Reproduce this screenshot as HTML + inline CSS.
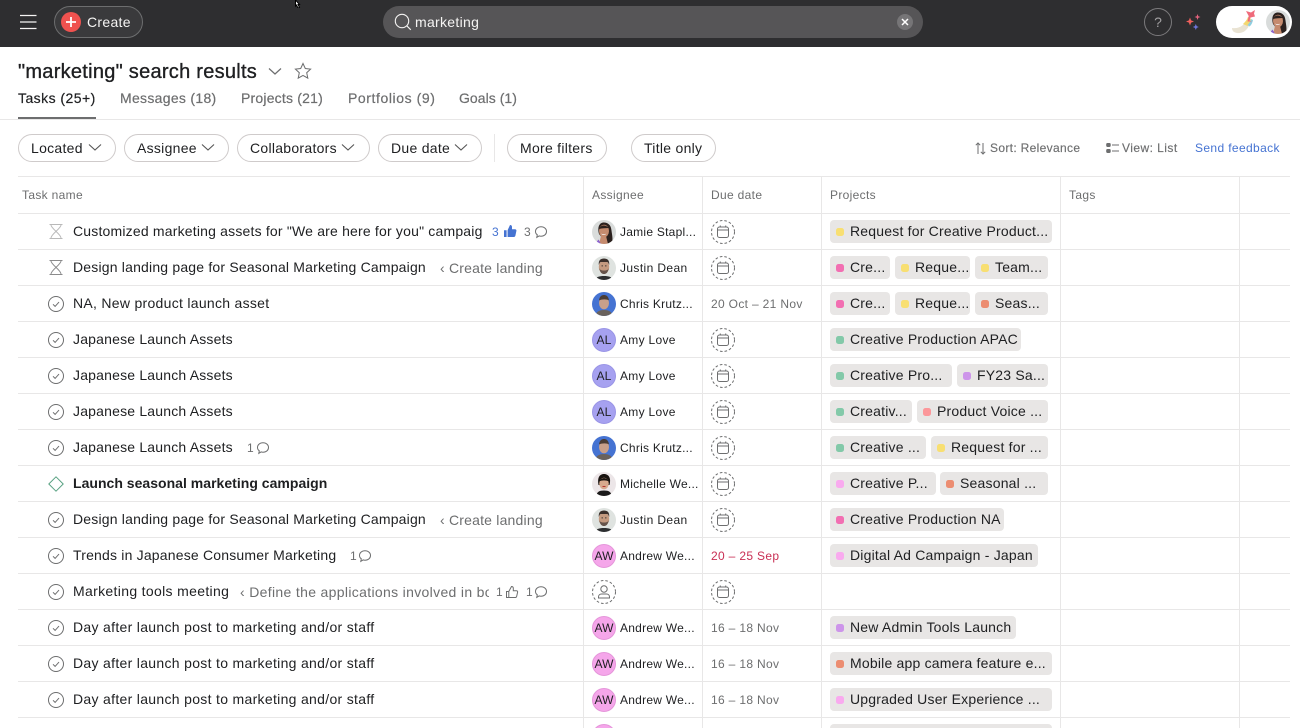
<!DOCTYPE html>
<html lang="en">
<head>
<meta charset="utf-8">
<title>"marketing" search results</title>
<style>
*{box-sizing:border-box}
html,body{margin:0;padding:0;background:#fff}
body{width:1300px;height:728px;position:relative;overflow:hidden;font-family:"Liberation Sans",sans-serif;color:#1e1f21}
.a{position:absolute;white-space:nowrap}
#top{position:absolute;left:0;top:0;width:1300px;height:47px;background:#2e2e30}
.tab{position:absolute;top:90px;font-size:14px;line-height:17px;color:#6d6e6f;-webkit-text-stroke:.2px}
.pill{position:absolute;top:134px;height:28px;border:1px solid #cfcbcb;border-radius:14px;font-size:14px;line-height:26px;letter-spacing:.28px;color:#1e1f21;padding-left:12px}
.pill svg{position:absolute;top:8px}
.hl{position:absolute;left:18px;width:1272px;height:1px;background:#e8e7e7}
.vl{position:absolute;top:177px;height:551px;width:1px;background:#e8e7e7}
.th{position:absolute;top:187px;font-size:12px;line-height:16px;letter-spacing:.33px;color:#6d6e6f}
.r{position:absolute;left:0;width:1300px;height:36px}
.t{position:absolute;left:73px;top:8px;font-size:14px;line-height:18px;letter-spacing:.19px;white-space:nowrap;color:#1e1f21}
.s{position:absolute;top:9px;font-size:14px;line-height:18px;letter-spacing:.2px;white-space:nowrap;color:#6d6e6f}
.n{position:absolute;left:620px;top:10px;font-size:12px;line-height:16px;letter-spacing:.25px;white-space:nowrap;color:#1e1f21}
.d{position:absolute;left:711px;top:10px;font-size:12px;line-height:16px;letter-spacing:.33px;white-space:nowrap;color:#6d6e6f}
.c{position:absolute;top:10px;font-size:12px;line-height:16px;letter-spacing:.3px;white-space:nowrap;color:#6d6e6f}
.g{position:absolute;top:6px;height:23px;background:#e8e6e5;border-radius:4px;font-size:14px;line-height:23px;letter-spacing:.2px;white-space:nowrap;color:#1e1f21;padding-left:20px;overflow:hidden}
.g i{position:absolute;left:6px;top:8px;width:8px;height:8px;border-radius:2.5px}
.i{position:absolute;left:48px;top:10px;width:16px;height:16px}
.av{position:absolute;left:592px;top:6px;width:24px;height:24px}
.ini{position:absolute;left:592px;top:6px;width:24px;height:24px;border-radius:50%;font-size:12px;line-height:22px;text-align:center;letter-spacing:.1px;color:#1e1f21}
.al{background:#a6a1f0;border:1px solid #9a95e6}
.aw{background:#f5a6ea;border:1px solid #e596da}
.cal{position:absolute;left:711px;top:6px;width:24px;height:24px}
.y{background:#f8df72}.p{background:#f26fb2}.o{background:#ec8d71}.gr{background:#83c9a9}.v{background:#cd95ea}.sa{background:#fc979a}.lp{background:#f9aaef}
</style>
</head>
<body>
<svg width="0" height="0" style="position:absolute">
<defs>
<symbol id="chk" viewBox="0 0 16 16"><circle cx="8" cy="8" r="7.500" fill="none" stroke="#6d6e6f" stroke-width="1"/><path d="M5 8.300l2.100 2.100 3.900-4.300" fill="none" stroke="#6d6e6f" stroke-width="1"/></symbol>
<symbol id="hg" viewBox="0 0 16 16"><path d="M1.500 .5h13M1.500 14.500h13M3 1c0 3.500 10 9 10 13M13 1c0 3.500-10 9-10 13" fill="none" stroke="#8b8b8c" stroke-width="1"/></symbol>
<symbol id="cal" viewBox="0 0 24 24"><circle cx="12" cy="12" r="11.500" fill="none" stroke="#6d6e6f" stroke-width="1" stroke-dasharray="2.600 2"/><rect x="6.500" y="7" width="11" height="10.500" rx="2" fill="none" stroke="#6d6e6f" stroke-width="1"/><path d="M6.500 10h11M9.300 5.500V7.500M14.700 5.500V7.500" fill="none" stroke="#6d6e6f" stroke-width="1"/></symbol>
<symbol id="usr" viewBox="0 0 24 24"><circle cx="12" cy="12" r="11.500" fill="none" stroke="#6d6e6f" stroke-width="1" stroke-dasharray="2.600 2"/><circle cx="12" cy="9" r="3.200" fill="none" stroke="#6d6e6f"/><path d="M6.500 18v-1c0-2 1.500-3 3-3h5c1.500 0 3 1 3 3v1z" fill="none" stroke="#6d6e6f"/></symbol>
<symbol id="bub" viewBox="0 0 14 14"><path d="M7 1.800c3.200 0 5.500 2 5.500 4.700S10.200 11.200 7 11.200c-.7 0-1.300-.1-1.900-.3L2.800 12.300l.5-2.500C2.100 9 1.500 7.800 1.500 6.500 1.500 3.800 3.800 1.800 7 1.800z" fill="none" stroke="#6d6e6f"/></symbol>
<symbol id="thumb" viewBox="0 0 14 14"><path d="M1 6.200h2.600V13H1zM4.600 6.200L7 1c1.300 0 2 .8 2 2v2.200h3c1 0 1.600.8 1.400 1.700l-1 4.700c-.2.800-.7 1.400-1.600 1.400H4.600z" fill="#4573d2"/></symbol>
<symbol id="thumbo" viewBox="0 0 14 14"><path d="M1.500 6.500h2.300V12.500H1.500zM3.800 6.500L6.500 1.500c1.100 0 1.800.7 1.800 1.800v2.400h3.100c.9 0 1.400.7 1.200 1.500l-.9 4c-.2.800-.7 1.300-1.500 1.300H3.800" fill="none" stroke="#6d6e6f"/></symbol>
<symbol id="jam" viewBox="0 0 24 24"><clipPath id="cj"><circle cx="12" cy="12" r="12"/></clipPath><g clip-path="url(#cj)"><rect width="24" height="24" fill="#d9dcdb"/><path d="M7 14C5 6 8 2.500 12 2.500s7 2.500 7.500 8c.4 4 2 9 0 13.500H15z" fill="#2b211e"/><ellipse cx="12" cy="11" rx="5" ry="6.300" fill="#c58b6e"/><path d="M7 9c1.500-4 6-5 10-1-3 .2-7 .2-10 1z" fill="#2b211e"/><path d="M9.200 13.500c1.700 1 3.700 1 5 0-.5 2-4.500 2-5 0z" fill="#fff"/><path d="M9 16h5l2 8H7z" fill="#c58b6e"/><path d="M3 24l3.500-4.500L9 24z" fill="#8a5fd0"/></g></symbol>
<symbol id="jus" viewBox="0 0 24 24"><clipPath id="cd"><circle cx="12" cy="12" r="12"/></clipPath><g clip-path="url(#cd)"><rect width="24" height="24" fill="#dfe3e0"/><ellipse cx="12" cy="11" rx="5.200" ry="6.500" fill="#c49a80"/><path d="M6.800 9c-.5-5 2-6.500 5.200-6.500s5.700 1.500 5.200 6.500c-.8-2-1-3-2.500-3H9.300C7.800 6 7.600 7 6.800 9z" fill="#3a2f2b"/><path d="M7.200 12c1 5.500 3.300 6 4.800 6s3.800-.5 4.800-6c-.5 1.500-1.800 2.500-4.800 2.500S7.700 13.500 7.200 12z" fill="#65534a"/><path d="M3 24c1-3 4-4 9-4s8 1 9 4z" fill="#2c2e30"/><rect x="9.500" y="9.500" width="1.500" height=".8" fill="#222"/><rect x="13" y="9.500" width="1.500" height=".8" fill="#222"/></g></symbol>
<symbol id="chr" viewBox="0 0 24 24"><clipPath id="cc"><circle cx="12" cy="12" r="12"/></clipPath><g clip-path="url(#cc)"><rect width="24" height="24" fill="#4573d2"/><ellipse cx="12" cy="11" rx="5" ry="6.300" fill="#c9a08a"/><path d="M7 8.500C7.500 4 10 3 12 3s4.500 1 5 5.500c-2-1.500-7-1.500-10 0z" fill="#4b3d35"/><path d="M3 24c1-4 4-6 9-6s8 2 9 6z" fill="#6a625c"/></g></symbol>
<symbol id="mic" viewBox="0 0 24 24"><clipPath id="cm"><circle cx="12" cy="12" r="12"/></clipPath><g clip-path="url(#cm)"><rect width="24" height="24" fill="#ece6e8"/><path d="M6.500 13C5 5 8 2 12 2s7.500 3 5.500 11z" fill="#18130f"/><ellipse cx="12" cy="11.500" rx="4.800" ry="5.800" fill="#d7a98d"/><path d="M7 9.500C9 5 15 5 17 9.500c-3-1.500-7-1.500-10 0z" fill="#18130f"/><rect x="10.500" y="14" width="3" height="1" fill="#b5332f"/><path d="M4 24c1-4 3-5.500 8-5.500s7 1.500 8 5.500z" fill="#1b1a1a"/></g></symbol>
</defs>
</svg>

<div id="top"></div>
<svg class="a" style="left:20px;top:14px" width="17" height="16" viewBox="0 0 17 16"><path d="M0 1.500h16.500M0 8h16.500M0 14.500h16.500" stroke="#f5f4f3" stroke-width="1.200" fill="none"/></svg>
<div class="a" style="left:54px;top:6px;width:89px;height:32px;border:1px solid #6d6e6f;border-radius:16px;background:#3a3a3c"></div>
<div class="a" style="left:61px;top:12px;width:20px;height:20px;border-radius:50%;background:#f0524f"></div>
<svg class="a" style="left:65px;top:16px" width="12" height="12" viewBox="0 0 12 12"><path d="M6 1v10M1 6h10" stroke="#fff" stroke-width="1.800"/></svg>
<div class="a" style="left:87px;top:13px;font-size:14px;line-height:18px;letter-spacing:.3px;color:#f5f4f3">Create</div>
<svg class="a" style="left:293px;top:0" width="11" height="8" viewBox="0 0 11 8"><path d="M2.500 0l4 4.500H5l1.500 3-1.500.5-1.500-3-1 1z" fill="#fff" stroke="#000" stroke-width="1"/></svg>
<div class="a" style="left:383px;top:6px;width:540px;height:32px;border-radius:16px;background:#565557"></div>
<svg class="a" style="left:394px;top:13px" width="18" height="18" viewBox="0 0 18 18"><circle cx="8" cy="8" r="6.700" fill="none" stroke="#f5f4f3" stroke-width="1.100"/><path d="M12.800 12.800l4 4" stroke="#f5f4f3" stroke-width="1.100"/></svg>
<div class="a" style="left:415px;top:13px;font-size:14px;line-height:18px;letter-spacing:.3px;color:#f5f4f3">marketing</div>
<div class="a" style="left:897px;top:14px;width:16px;height:16px;border-radius:50%;background:#767577"></div>
<svg class="a" style="left:901px;top:18px" width="8" height="8" viewBox="0 0 8 8"><path d="M1 1l6 6M7 1L1 7" stroke="#fff" stroke-width="1.500"/></svg>
<div class="a" style="left:1144px;top:8px;width:28px;height:28px;border:1px solid #7b7a7c;border-radius:50%;font-size:14px;line-height:26px;text-align:center;color:#a2a0a2">?</div>
<svg class="a" style="left:1185px;top:13px" width="18" height="18" viewBox="0 0 18 18"><path d="M5 3.500l1.100 2.900 2.900 1.100-2.900 1.100L5 11.500 3.900 8.600 1 7.500l2.900-1.100z" fill="#f0605c" transform="translate(0 1)"/><path d="M12.500 1l.8 2.200 2.200.8-2.200.8-.8 2.200-.8-2.200-2.200-.8 2.200-.8z" fill="#e8637e"/><path d="M10.800 11l.9 2.100 2.100.9-2.100.9-.9 2.100-.9-2.100-2.100-.9 2.100-.9z" fill="#6e76dc"/></svg>
<div class="a" style="left:1216px;top:6px;width:76px;height:32px;border-radius:16px;background:#fff"></div>
<svg class="a" style="left:1230px;top:8px" width="30" height="28" viewBox="0 0 30 28"><path d="M2 20c8 1 13-3 16-11l3 2c-1 8-6 15-14 14-3-.5-5-2-5-5z" fill="#e9e3d3"/><path d="M13 16c2-2 4-4 5-7l3 2c-.5 3-1.500 5-3.500 7z" fill="#f4d76e"/><path d="M17.500 17c1.500-1.500 3-3.500 3.500-6l2 1c-.5 2.500-1.500 5-3.500 6.500z" fill="#8fcfe0"/><path d="M16 3l5 1.500L25 2l-1 3.500 1 3-4.500 1-1 3 2.500 1-4.500 0 1.200-5.500z" fill="#ef6b7b"/></svg>
<svg class="a" style="left:1266px;top:10px" width="24" height="24"><use href="#jam"/></svg>

<div class="a" style="left:18px;top:60px;font-size:20px;line-height:25px;letter-spacing:.27px;color:#1e1f21;-webkit-text-stroke:.35px #1e1f21">"marketing" search results</div>
<svg class="a" style="left:268px;top:67px" width="14" height="9" viewBox="0 0 14 9"><path d="M1 1.500l6 5.500 6-5.500" fill="none" stroke="#6d6e6f" stroke-width="1.200"/></svg>
<svg class="a" style="left:294px;top:62px" width="18" height="18" viewBox="0 0 18 18"><path d="M9 1.500l2.300 5 5.300.6-3.900 3.600 1.100 5.400L9 13.400l-4.800 2.700 1.100-5.400L1.400 7.100l5.300-.6z" fill="none" stroke="#6d6e6f" stroke-width="1"/></svg>

<div class="tab" style="left:18px;color:#1e1f21;letter-spacing:.45px">Tasks (25+)</div>
<div class="tab" style="left:120px;letter-spacing:.3px">Messages (18)</div>
<div class="tab" style="left:241px;letter-spacing:.2px">Projects (21)</div>
<div class="tab" style="left:348px;letter-spacing:.58px">Portfolios (9)</div>
<div class="tab" style="left:459px;letter-spacing:.04px">Goals (1)</div>
<div class="a" style="left:18px;top:117px;width:78px;height:2px;background:#6d6e6f"></div>
<div class="a" style="left:0;top:119px;width:1300px;height:1px;background:#e8e7e7"></div>

<div class="pill" style="left:18px;width:98px">Located<svg style="left:69px" width="14" height="9" viewBox="0 0 14 9"><path d="M1 1.500l6 5.500 6-5.500" fill="none" stroke="#555" stroke-width="1.100"/></svg></div>
<div class="pill" style="left:124px;width:105px">Assignee<svg style="left:76px" width="14" height="9" viewBox="0 0 14 9"><path d="M1 1.500l6 5.500 6-5.500" fill="none" stroke="#555" stroke-width="1.100"/></svg></div>
<div class="pill" style="left:237px;width:133px">Collaborators<svg style="left:103px" width="14" height="9" viewBox="0 0 14 9"><path d="M1 1.500l6 5.500 6-5.500" fill="none" stroke="#555" stroke-width="1.100"/></svg></div>
<div class="pill" style="left:378px;width:104px">Due date<svg style="left:75px" width="14" height="9" viewBox="0 0 14 9"><path d="M1 1.500l6 5.500 6-5.500" fill="none" stroke="#555" stroke-width="1.100"/></svg></div>
<div class="a" style="left:494px;top:134px;width:1px;height:28px;background:#e8e7e7"></div>
<div class="pill" style="left:507px;width:100px">More filters</div>
<div class="pill" style="left:631px;width:85px">Title only</div>

<svg class="a" style="left:975px;top:142px" width="11" height="13" viewBox="0 0 11 13"><path d="M3 12V1M.8 3.200L3 1l2.200 2.200M8 1v11M5.800 9.800L8 12l2.200-2.200" fill="none" stroke="#6d6e6f"/></svg>
<div class="a" style="left:990px;top:140px;font-size:12px;line-height:16px;letter-spacing:.33px;color:#6d6e6f;-webkit-text-stroke:.15px">Sort: Relevance</div>
<svg class="a" style="left:1106px;top:142px" width="13" height="12" viewBox="0 0 13 12"><rect x=".2" y="1" width="4.500" height="4" rx="1.200" fill="#6d6e6f"/><rect x=".2" y="7" width="4.500" height="4" rx="1.200" fill="#6d6e6f"/><path d="M6 3H13M6 9H13" stroke="#6d6e6f"/></svg>
<div class="a" style="left:1122px;top:140px;font-size:12px;line-height:16px;letter-spacing:.45px;color:#6d6e6f;-webkit-text-stroke:.15px">View: List</div>
<div class="a" style="left:1195px;top:140px;font-size:12px;line-height:16px;letter-spacing:.37px;color:#4573d2">Send feedback</div>

<div class="hl" style="top:176px"></div>
<div class="th" style="left:22px">Task name</div>
<div class="th" style="left:592px">Assignee</div>
<div class="th" style="left:711px">Due date</div>
<div class="th" style="left:830px">Projects</div>
<div class="th" style="left:1069px">Tags</div>

<div class="hl" style="top:213px"></div><div class="hl" style="top:249px"></div><div class="hl" style="top:285px"></div><div class="hl" style="top:321px"></div><div class="hl" style="top:357px"></div><div class="hl" style="top:393px"></div><div class="hl" style="top:429px"></div><div class="hl" style="top:465px"></div><div class="hl" style="top:501px"></div><div class="hl" style="top:537px"></div><div class="hl" style="top:573px"></div><div class="hl" style="top:609px"></div><div class="hl" style="top:645px"></div><div class="hl" style="top:681px"></div><div class="hl" style="top:717px"></div>
<div class="vl" style="left:583px"></div><div class="vl" style="left:702px"></div><div class="vl" style="left:821px"></div><div class="vl" style="left:1060px"></div><div class="vl" style="left:1239px"></div>

<div class="r" style="top:214px"><svg class="i" style="opacity:.6"><use href="#hg"/></svg><div class="t" style="width:410px;overflow:hidden">Customized marketing assets for "We are here for you" campaign</div><div class="c" style="left:492px;color:#4573d2">3</div><svg class="a" style="left:503px;top:10px" width="14" height="14"><use href="#thumb"/></svg><div class="c" style="left:524px">3</div><svg class="a" style="left:534px;top:11px" width="14" height="14"><use href="#bub"/></svg><svg class="av"><use href="#jam"/></svg><div class="n">Jamie Stapl...</div><svg class="cal"><use href="#cal"/></svg><div class="g" style="left:830px;width:222px"><i class="y"></i>Request for Creative Product...</div></div>

<div class="r" style="top:250px"><svg class="i"><use href="#hg"/></svg><div class="t">Design landing page for Seasonal Marketing Campaign</div><div class="s" style="left:440px">‹ Create landing</div><svg class="av"><use href="#jus"/></svg><div class="n" style="letter-spacing:.38px">Justin Dean</div><svg class="cal"><use href="#cal"/></svg><div class="g" style="left:830px;width:60px"><i class="p"></i>Cre...</div><div class="g" style="left:895px;width:75px"><i class="y"></i>Reque...</div><div class="g" style="left:975px;width:73px"><i class="y"></i>Team...</div></div>

<div class="r" style="top:286px"><svg class="i"><use href="#chk"/></svg><div class="t" style="letter-spacing:.29px">NA, New product launch asset</div><svg class="av"><use href="#chr"/></svg><div class="n">Chris Krutz...</div><div class="d">20 Oct – 21 Nov</div><div class="g" style="left:830px;width:60px"><i class="p"></i>Cre...</div><div class="g" style="left:895px;width:75px"><i class="y"></i>Reque...</div><div class="g" style="left:975px;width:73px"><i class="o"></i>Seas...</div></div>

<div class="r" style="top:322px"><svg class="i"><use href="#chk"/></svg><div class="t">Japanese Launch Assets</div><div class="ini al">AL</div><div class="n" style="letter-spacing:.3px">Amy Love</div><svg class="cal"><use href="#cal"/></svg><div class="g" style="left:830px;width:191px"><i class="gr"></i>Creative Production APAC</div></div>

<div class="r" style="top:358px"><svg class="i"><use href="#chk"/></svg><div class="t">Japanese Launch Assets</div><div class="ini al">AL</div><div class="n" style="letter-spacing:.3px">Amy Love</div><svg class="cal"><use href="#cal"/></svg><div class="g" style="left:830px;width:122px"><i class="gr"></i>Creative Pro...</div><div class="g" style="left:957px;width:91px"><i class="v"></i>FY23 Sa...</div></div>

<div class="r" style="top:394px"><svg class="i"><use href="#chk"/></svg><div class="t">Japanese Launch Assets</div><div class="ini al">AL</div><div class="n" style="letter-spacing:.3px">Amy Love</div><svg class="cal"><use href="#cal"/></svg><div class="g" style="left:830px;width:82px"><i class="gr"></i>Creativ...</div><div class="g" style="left:917px;width:131px"><i class="sa"></i>Product Voice ...</div></div>

<div class="r" style="top:430px"><svg class="i"><use href="#chk"/></svg><div class="t">Japanese Launch Assets</div><div class="c" style="left:247px">1</div><svg class="a" style="left:256px;top:11px" width="14" height="14"><use href="#bub"/></svg><svg class="av"><use href="#chr"/></svg><div class="n">Chris Krutz...</div><svg class="cal"><use href="#cal"/></svg><div class="g" style="left:830px;width:96px"><i class="gr"></i>Creative ...</div><div class="g" style="left:931px;width:117px"><i class="y"></i>Request for ...</div></div>

<div class="r" style="top:466px"><svg class="i" viewBox="0 0 16 16"><path d="M8 .8L15.200 8 8 15.200.8 8z" fill="none" stroke="#58a182" stroke-width="1" stroke-linejoin="round"/></svg><div class="t" style="font-weight:700;letter-spacing:.02px">Launch seasonal marketing campaign</div><svg class="av"><use href="#mic"/></svg><div class="n">Michelle We...</div><svg class="cal"><use href="#cal"/></svg><div class="g" style="left:830px;width:106px"><i class="lp"></i>Creative P...</div><div class="g" style="left:940px;width:108px"><i class="o"></i>Seasonal ...</div></div>

<div class="r" style="top:502px"><svg class="i"><use href="#chk"/></svg><div class="t">Design landing page for Seasonal Marketing Campaign</div><div class="s" style="left:440px">‹ Create landing</div><svg class="av"><use href="#jus"/></svg><div class="n" style="letter-spacing:.38px">Justin Dean</div><svg class="cal"><use href="#cal"/></svg><div class="g" style="left:830px;width:174px"><i class="p"></i>Creative Production NA</div></div>

<div class="r" style="top:538px"><svg class="i"><use href="#chk"/></svg><div class="t">Trends in Japanese Consumer Marketing</div><div class="c" style="left:350px">1</div><svg class="a" style="left:358px;top:11px" width="14" height="14"><use href="#bub"/></svg><div class="ini aw">AW</div><div class="n">Andrew We...</div><div class="d" style="color:#c92f54">20 – 25 Sep</div><div class="g" style="left:830px;width:208px"><i class="lp"></i>Digital Ad Campaign - Japan</div></div>

<div class="r" style="top:574px"><svg class="i"><use href="#chk"/></svg><div class="t" style="letter-spacing:.33px">Marketing tools meeting</div><div class="s" style="left:240px;width:249px;overflow:hidden;letter-spacing:.33px">‹ Define the applications involved in both</div><div class="c" style="left:496px">1</div><svg class="a" style="left:505px;top:11px" width="14" height="14"><use href="#thumbo"/></svg><div class="c" style="left:526px">1</div><svg class="a" style="left:534px;top:11px" width="14" height="14"><use href="#bub"/></svg><svg class="av"><use href="#usr"/></svg><svg class="cal"><use href="#cal"/></svg></div>

<div class="r" style="top:610px"><svg class="i"><use href="#chk"/></svg><div class="t" style="letter-spacing:.31px">Day after launch post to marketing and/or staff</div><div class="ini aw">AW</div><div class="n">Andrew We...</div><div class="d">16 – 18 Nov</div><div class="g" style="left:830px;width:186px"><i class="v"></i>New Admin Tools Launch</div></div>

<div class="r" style="top:646px"><svg class="i"><use href="#chk"/></svg><div class="t" style="letter-spacing:.31px">Day after launch post to marketing and/or staff</div><div class="ini aw">AW</div><div class="n">Andrew We...</div><div class="d">16 – 18 Nov</div><div class="g" style="left:830px;width:222px"><i class="o"></i>Mobile app camera feature e...</div></div>

<div class="r" style="top:682px"><svg class="i"><use href="#chk"/></svg><div class="t" style="letter-spacing:.31px">Day after launch post to marketing and/or staff</div><div class="ini aw">AW</div><div class="n">Andrew We...</div><div class="d">16 – 18 Nov</div><div class="g" style="left:830px;width:222px"><i class="lp"></i>Upgraded User Experience ...</div></div>

<div class="r" style="top:718px;height:10px;overflow:hidden"><svg class="i"><use href="#chk"/></svg><div class="ini aw"></div><div class="g" style="left:830px;width:222px"></div></div>
</body>
</html>
